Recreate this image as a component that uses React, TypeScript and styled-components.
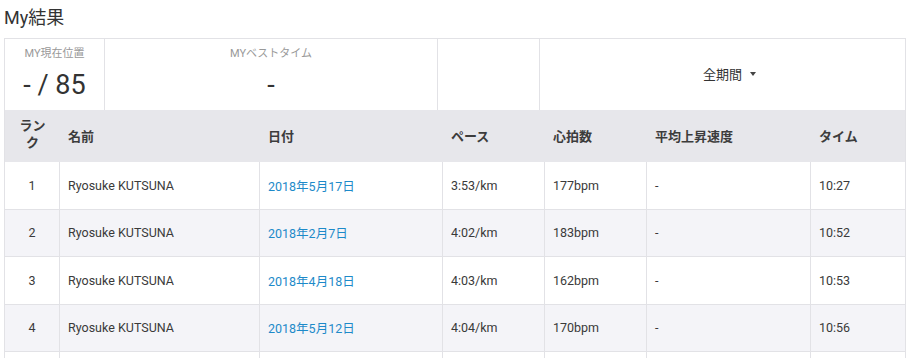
import React from 'react';
import styled, { createGlobalStyle } from 'styled-components';

type Result = {
  rank: number;
  name: string;
  date: string;
  pace: string;
  heartRate: string;
  climb: string;
  time: string;
};

const results: Result[] = [
  { rank: 1, name: 'Ryosuke KUTSUNA', date: '2018年5月17日', pace: '3:53/km', heartRate: '177bpm', climb: '-', time: '10:27' },
  { rank: 2, name: 'Ryosuke KUTSUNA', date: '2018年2月7日', pace: '4:02/km', heartRate: '183bpm', climb: '-', time: '10:52' },
  { rank: 3, name: 'Ryosuke KUTSUNA', date: '2018年4月18日', pace: '4:03/km', heartRate: '162bpm', climb: '-', time: '10:53' },
  { rank: 4, name: 'Ryosuke KUTSUNA', date: '2018年5月12日', pace: '4:04/km', heartRate: '170bpm', climb: '-', time: '10:56' },
];

const columns = [
  { label: 'ランク', width: 55, narrow: true },
  { label: '名前', width: 200 },
  { label: '日付', width: 183 },
  { label: 'ペース', width: 102 },
  { label: '心拍数', width: 102 },
  { label: '平均上昇速度', width: 164 },
  { label: 'タイム', width: 94 },
];

const App = () => {
  return (
    <>
      <GlobalStyle />
      <StyledPage>
        <StyledTitle>My結果</StyledTitle>
        <StyledBox>
          <StyledStats>
            <StyledStat $width={100}>
              <StyledStatLabel>MY現在位置</StyledStatLabel>
              <StyledStatValue>- / 85</StyledStatValue>
            </StyledStat>
            <StyledStat $width={333}>
              <StyledStatLabel>MYベストタイム</StyledStatLabel>
              <StyledStatValue>-</StyledStatValue>
            </StyledStat>
            <StyledStat $width={102} />
            <StyledPeriod>
              全期間
              <StyledCaret />
            </StyledPeriod>
          </StyledStats>
          <StyledTable>
            <thead>
              <tr>
                {columns.map((col) => (
                  <StyledTh key={col.label} $width={col.width} $narrow={col.narrow}>
                    {col.label}
                  </StyledTh>
                ))}
              </tr>
            </thead>
            <tbody>
              {results.map((r) => (
                <StyledRow key={r.rank} $striped={r.rank % 2 === 0}>
                  <StyledTd $center>{r.rank}</StyledTd>
                  <StyledTd>{r.name}</StyledTd>
                  <StyledTd>
                    <StyledLink href="#">{r.date}</StyledLink>
                  </StyledTd>
                  <StyledTd>{r.pace}</StyledTd>
                  <StyledTd>{r.heartRate}</StyledTd>
                  <StyledTd>{r.climb}</StyledTd>
                  <StyledTd>{r.time}</StyledTd>
                </StyledRow>
              ))}
              {/* 次の行は画面外、枠だけ見えている */}
              <StyledRow $striped={false}>
                {columns.map((col) => (
                  <StyledTd key={col.label} />
                ))}
              </StyledRow>
            </tbody>
          </StyledTable>
        </StyledBox>
      </StyledPage>
    </>
  );
};

export default App;

const GlobalStyle = createGlobalStyle`
  body {
    margin: 0;
    background: #fff;
    font-family: Roboto, "Noto Sans CJK JP", sans-serif;
    color: #333;
  }
`;

const StyledPage = styled.div`
  padding: 0 4px;
  height: 358px;
  overflow: hidden;
`;

const StyledTitle = styled.h1`
  margin: 0;
  padding-top: 5px;
  height: 33px;
  line-height: 26px;
  font-size: 18px;
  font-weight: 400;
  color: #333;
`;

const StyledBox = styled.div`
  width: 902px;
  box-sizing: border-box;
  border: 1px solid #e2e2e6;
  border-bottom: none;
`;

const StyledStats = styled.div`
  display: flex;
  height: 71px;
`;

const StyledStat = styled.div<{ $width: number }>`
  width: ${(p) => p.$width}px;
  box-sizing: border-box;
  border-right: 1px solid #e2e2e6;
  display: flex;
  flex-direction: column;
  align-items: center;
  padding-top: 8px;
`;

const StyledStatLabel = styled.div`
  font-size: 11px;
  line-height: 14px;
  color: #999;
`;

const StyledStatValue = styled.div`
  font-size: 27px;
  line-height: 34px;
  margin-top: 7px;
  color: #333;
`;

const StyledPeriod = styled.div`
  flex: 1;
  display: flex;
  align-items: center;
  justify-content: center;
  gap: 8px;
  padding: 0 0 2px 14px;
  font-size: 13px;
  color: #333;
`;

const StyledCaret = styled.span`
  width: 0;
  height: 0;
  margin-top: 1px;
  border-left: 3px solid transparent;
  border-right: 3px solid transparent;
  border-top: 4px solid #444;
`;

const StyledTable = styled.table`
  width: 900px;
  table-layout: fixed;
  border-collapse: separate;
  border-spacing: 0;
  font-size: 12.5px;
`;

const StyledTh = styled.th<{ $width: number; $narrow?: boolean }>`
  width: ${(p) => p.$width}px;
  box-sizing: border-box;
  height: 52px;
  padding: ${(p) => (p.$narrow ? '0 10px 4px' : '0 8px')};
  background: #e7e7eb;
  text-align: ${(p) => (p.$narrow ? 'center' : 'left')};
  font-weight: 700;
  font-size: 13px;
  line-height: ${(p) => (p.$narrow ? '17px' : '19px')};
  color: #3c3c3c;
`;

const StyledRow = styled.tr<{ $striped: boolean }>`
  background: ${(p) => (p.$striped ? '#f4f4f8' : '#fff')};
`;

const StyledTd = styled.td<{ $center?: boolean }>`
  box-sizing: border-box;
  height: 47.5px;
  padding: 0 8px;
  text-align: ${(p) => (p.$center ? 'center' : 'left')};
  border-right: 1px solid #e2e2e6;
  border-bottom: 1px solid #e2e2e6;
  color: #3a3a3a;
  white-space: nowrap;

  &:last-child {
    border-right: none;
  }
`;

const StyledLink = styled.a`
  color: #1d8ac9;
  text-decoration: none;
`;
